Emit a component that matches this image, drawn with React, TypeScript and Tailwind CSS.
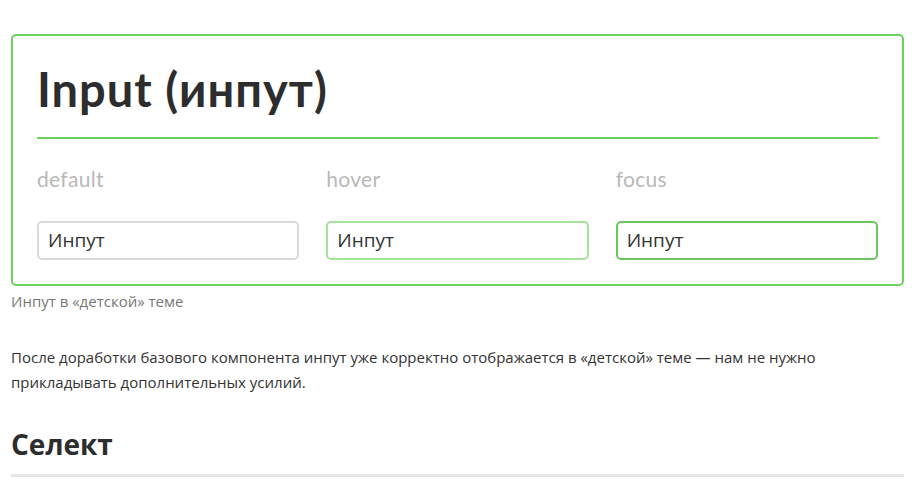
import React from "react";

const states = [
  { label: "default", cls: "border-[#d9d9d9]" },
  { label: "hover", cls: "border-[#a6e29c]" },
  { label: "focus", cls: "border-[#6cc65f]" },
];

export default function App() {
  return (
    <div className="min-h-[493px] bg-white pl-[11px] pr-[18px] pt-[34px] text-[#333]" style={{ fontFamily: '"Open Sans", sans-serif' }}>
      <div className="rounded-[5px] border-2 border-[#6ad35c] px-[24px] pt-[23px] pb-[24px]">
        <h1 className="text-[47px] font-bold leading-[60px] tracking-[1px] text-[#2d2d2d]" style={{ fontFamily: "Lato, sans-serif" }}>
          Input (инпут)
        </h1>
        <div className="mt-[18px] h-[2px] bg-[#6ad35c]" />
        <div className="mt-[28px] grid grid-cols-3 gap-[27px]">
          {states.map((s) => (
            <div key={s.label} className="flex flex-col">
              <div className="text-[21px] leading-[24px] tracking-[0.3px] text-[#b8b8b8]" style={{ fontFamily: "Lato, sans-serif" }}>
                {s.label}
              </div>
              <div className={`mt-[30px] flex h-[39px] items-center rounded-[5px] border-2 ${s.cls} px-[9px] text-[19px] text-[#333]`}>
                Инпут
              </div>
            </div>
          ))}
        </div>
      </div>
      <div className="mt-[5px] text-[15px] leading-[20px] text-[#777]">Инпут в «детской» теме</div>
      <p className="mt-[34px] text-[15px] leading-[25px] text-[#333]">
        После доработки базового компонента инпут уже корректно отображается в «детской» теме — нам не нужно прикладывать дополнительных усилий.
      </p>
      <h2 className="mt-[31px] text-[28px] font-bold leading-[36px] text-[#2d2d2d]">Селект</h2>
      <div className="mt-[12px] h-[3px] bg-[#e6e6e6]" />
    </div>
  );
}
